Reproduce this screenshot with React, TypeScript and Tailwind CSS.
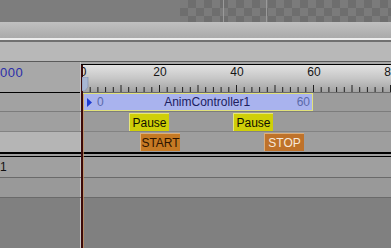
import React from 'react';

// frame -> x offset inside the ruler (frame 0 sits 1px right of the ruler edge)
const fx = (f: number) => 1 + f * 3.85;

function Ruler() {
  const ticks: number[] = [];
  for (let f = 0; f <= 80; f += 2) ticks.push(f);
  return (
    <div className="relative h-[28px] border-t border-l border-black bg-gradient-to-b from-[#e2e2e2] via-[#c6c6c6] to-[#a2a2a2] overflow-hidden">
      <svg className="absolute inset-0" width="310" height="28">
        {ticks.map((f) => (
          <line
            key={f}
            x1={fx(f) - 0.5}
            x2={fx(f) - 0.5}
            y1={f % 10 === 0 ? 20 : 22}
            y2={28}
            stroke="#202020"
            strokeWidth="1"
          />
        ))}
      </svg>
      {[0, 20, 40, 60, 80].map((n) => (
        <span
          key={n}
          className="absolute top-[1px] -translate-x-1/2 text-[12px] leading-[13px] text-[#151515]"
          style={{ left: fx(n) }}
        >
          {n}
        </span>
      ))}
    </div>
  );
}

function Key({ label, left, kind }: { label: string; left: number; kind: 'pause' | 'start' | 'stop' }) {
  const styles = {
    pause: 'bg-[#cfcf08] border-t border-l border-[#e6e67a] text-[#101000]',
    start: 'bg-[#c67a24] border-t border-l border-[#dcae7a] text-[#2e1400]',
    stop: 'bg-[#bf722a] border-t border-l border-[#dcae7a] text-[#f6e8da]',
  }[kind];
  return (
    <div
      className={`absolute top-[1px] h-[18px] w-[40px] flex items-center justify-center text-[12px] ${styles}`}
      style={{ left }}
    >
      {label}
    </div>
  );
}

export default function App() {
  return (
    <div className="relative w-[391px] h-[248px] overflow-hidden bg-[#808080] font-['Liberation_Sans',Arial,sans-serif]">
      {/* viewport strip */}
      <div className="flex h-[22px] bg-[#7d7d7d]">
        <div className="w-[180px]" />
        <div className="relative flex-1 bg-[conic-gradient(#6e6e6e_25%,#7b7b7b_0_50%,#6e6e6e_0_75%,#7b7b7b_0)] bg-[length:16px_16px]">
          <div className="absolute left-[43px] top-0 bottom-0 w-px bg-[#9a9a9a]" />
          <div className="absolute left-[86px] top-0 bottom-0 w-px bg-[#9a9a9a]" />
        </div>
      </div>
      <div className="h-[16px] bg-gradient-to-b from-[#c0c0c0] to-[#aaaaaa]" />
      <div className="h-[2px] bg-[#ececec]" />
      <div className="h-[2px] bg-[#707070]" />
      <div className="h-[19px] bg-[#b8b8b8]" />
      <div className="h-px bg-[#5a5a5a]" />

      {/* track header + ruler */}
      <div className="flex h-[30px]">
        <div className="w-[80px] bg-[#a8a8a8] pt-[3px] text-[13px] leading-[15px] text-[#2b2ea8] tracking-[0.5px]">000</div>
        <div className="w-px bg-[#c4c4c4]" />
        <div className="flex-1 bg-[#a8a8a8] pt-[2px]">
          <Ruler />
        </div>
      </div>
      <div className="flex h-px">
        <div className="w-[80px] bg-black" />
        <div className="w-px bg-[#c4c4c4]" />
        <div className="flex-1 bg-[#6a6a6a]" />
      </div>

      {/* controller row */}
      <div className="flex h-[18px]">
        <div className="w-[80px] bg-[#a2a2a2]" />
        <div className="w-px bg-[#c4c4c4]" />
        <div className="flex-1 bg-[#9c9c9c] pl-[2px]">
          <div className="relative h-full w-[230px] border border-[#e2e27a] bg-[#a9b3ee] flex items-center text-[12px]">
            <svg className="ml-[3px]" width="5" height="9" viewBox="0 0 5 9">
              <polygon points="0,0 5,4.5 0,9" fill="#1e3cd2" />
            </svg>
            <span className="ml-[5px] text-[#5b6aa8]">0</span>
            <span className="flex-1 text-center pl-[14px] text-[#1c2060]">AnimController1</span>
            <span className="mr-[2px] text-[#5b6aa8]">60</span>
          </div>
        </div>
      </div>
      <div className="h-px bg-[#7c7c7c]" />

      {/* pause keys */}
      <div className="flex h-[19px]">
        <div className="w-[80px] bg-[#a0a0a0]" />
        <div className="w-px bg-[#c4c4c4]" />
        <div className="relative flex-1 bg-[#9b9b9b]">
          <Key label="Pause" left={48} kind="pause" />
          <Key label="Pause" left={152} kind="pause" />
        </div>
      </div>
      <div className="h-px bg-[#838383]" />

      {/* start / stop keys */}
      <div className="flex h-[20px]">
        <div className="w-[80px] bg-[#b5b5b5]" />
        <div className="w-px bg-[#c4c4c4]" />
        <div className="relative flex-1 bg-[#9e9e9e]">
          <Key label="START" left={59} kind="start" />
          <Key label="STOP" left={183} kind="stop" />
        </div>
      </div>
      <div className="h-[2px] bg-black" />
      <div className="h-[2px] bg-[#9e9e9e]" />
      <div className="h-px bg-black" />

      <div className="flex h-[20px]">
        <div className="w-[80px] bg-[#a0a0a0] pt-[4px] text-[12px] leading-[13px] text-[#111]">1</div>
        <div className="w-px bg-[#c4c4c4]" />
        <div className="flex-1 bg-[#9f9f9f]" />
      </div>
      <div className="h-px bg-[#6a6a6a]" />
      <div className="flex h-[19px]">
        <div className="w-[80px] bg-[#999999]" />
        <div className="w-px bg-[#c4c4c4]" />
        <div className="flex-1 bg-[#999999]" />
      </div>
      <div className="h-px bg-[#6a6a6a]" />
      <div className="flex h-[50px]">
        <div className="w-[80px]" />
        <div className="w-px bg-[#c4c4c4]" />
      </div>

      {/* playhead */}
      <div className="absolute left-[81px] top-[65px] bottom-0 w-[2px] bg-[#3c0a0a]" />
      <div className="absolute left-[83px] top-[94px] bottom-0 w-px bg-[#c8905c] opacity-70" />
      <svg className="absolute left-[82px] top-[77px]" width="7" height="14" viewBox="0 0 7 14">
        <polygon points="0,0 6,0 6,10 3,14 0,14" fill="#a8b6d2" stroke="#7c8aa8" strokeWidth="0.6" />
      </svg>
    </div>
  );
}
